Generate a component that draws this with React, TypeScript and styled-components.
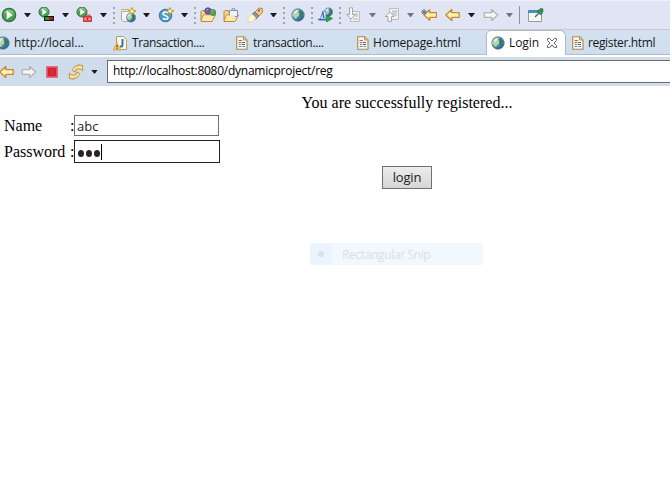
import React from "react";
import styled, { createGlobalStyle } from "styled-components";

const GlobalStyle = createGlobalStyle`
  * { box-sizing: border-box; }
  html, body { margin: 0; padding: 0; background: #fff; overflow: hidden; }
`;

const uiFont = `"Open Sans", "Noto Sans", sans-serif`;

const Window = styled.div`
  width: 670px;
  height: 503px;
  display: flex;
  flex-direction: column;
  overflow: hidden;
  background: #fff;
  font-family: ${uiFont};
  color: #000;
`;

const Toolbar = styled.div`
  height: 30px;
  flex: none;
  display: flex;
  align-items: center;
  padding-left: 1px;
  background: #e0e5f5;
  border-top: 1px solid #f0f0f0;
  border-bottom: 1px solid #c9c9cd;
`;

const Slot = styled.span<{ $gap?: number }>`
  display: block;
  flex: none;
  line-height: 0;
  margin-left: ${(p) => p.$gap ?? 0}px;
`;

const Arrow = styled.span<{ $gap: number; $dim?: boolean }>`
  flex: none;
  width: 7px;
  height: 4px;
  margin-left: ${(p) => p.$gap}px;
  background: ${(p) => (p.$dim ? "#74767e" : "#1c1c20")};
  clip-path: polygon(0 0, 100% 0, 57% 100%, 43% 100%);
`;

const Grip = styled.span<{ $gap: number }>`
  flex: none;
  width: 3px;
  height: 17px;
  margin-left: ${(p) => p.$gap}px;
  background: repeating-linear-gradient(#a5a5a2 0 2px, transparent 2px 5px) 1px 0 / 2px 17px no-repeat;
`;

const Divider = styled.span`
  flex: none;
  width: 1px;
  height: 18px;
  margin-left: 6px;
  background: #8d8f99;
`;

const TabBar = styled.div`
  height: 25px;
  flex: none;
  display: flex;
  background: linear-gradient(#d3e1f0, #cfdeee);
  box-shadow: inset 0 -1px #b7b8d4;
`;

const Tab = styled.div<{ $width: number; $pad: number; $active?: boolean }>`
  width: ${(p) => p.$width}px;
  height: 25px;
  flex: none;
  display: flex;
  align-items: center;
  padding-left: ${(p) => p.$pad}px;
  border-radius: 5px 6px 0 0;
  ${(p) =>
    p.$active &&
    `background: #fff; border: 1px solid #b3b7d2; border-bottom: 0;`}
`;

const TabLabel = styled.span<{ $gap: number; $spacing: number }>`
  margin-left: ${(p) => p.$gap}px;
  font-size: 12px;
  line-height: 16px;
  letter-spacing: ${(p) => p.$spacing}px;
  white-space: nowrap;
  color: #161616;
`;

const AddressRow = styled.div`
  height: 31px;
  flex: none;
  display: flex;
  align-items: center;
  border-top: 2px solid #fff;
  background: #cedcec;
`;

const AddressField = styled.div`
  flex: 1;
  height: 23px;
  margin: 0 -2px 0 9px;
  padding-left: 5px;
  border: 1px solid #6c6c6c;
  background: #fff;
  font-size: 12px;
  line-height: 20px;
  letter-spacing: -0.25px;
  white-space: nowrap;
`;

const Page = styled.main`
  flex: 1;
  width: 814px;
  padding-top: 8px;
  display: flex;
  flex-direction: column;
  align-items: center;
  font-family: "Liberation Serif", serif;
  font-size: 16px;
`;

const Message = styled.div`
  line-height: 18px;
  white-space: nowrap;
`;

const Form = styled.form`
  align-self: stretch;
  padding: 3px 0 0 4px;
`;

const Field = styled.label<{ $height: number }>`
  display: grid;
  grid-template-columns: 66px 4px auto;
  align-items: center;
  justify-content: start;
  height: ${(p) => p.$height}px;
  line-height: 18px;
`;

const TextBox = styled.span<{ $active?: boolean }>`
  display: flex;
  align-items: center;
  width: ${(p) => (p.$active ? 146 : 145)}px;
  height: ${(p) => (p.$active ? 23 : 21)}px;
  padding-left: ${(p) => (p.$active ? 3 : 2)}px;
  border: 1px solid ${(p) => (p.$active ? "#222" : "#707070")};
  font-family: ${uiFont};
  font-size: 13px;
  color: #222;
`;

const Bullet = styled.span`
  width: 6px;
  height: 7px;
  margin: 3px 2px 0 0;
  border-radius: 50%;
  background: #2a2224;
`;

const Caret = styled.span`
  width: 1px;
  height: 16px;
  margin-left: -1px;
  background: #000;
`;

const LoginButton = styled.button`
  width: 50px;
  height: 23px;
  margin-top: -1px;
  padding: 0 0 1px;
  border: 1px solid #707070;
  background: linear-gradient(#ececec, #d6d6d6);
  font-family: ${uiFont};
  font-size: 13px;
  line-height: 18px;
  letter-spacing: -0.2px;
  color: #222;
`;

const SnipHint = styled.div`
  align-self: flex-start;
  display: flex;
  align-items: center;
  width: 173px;
  height: 22px;
  margin: 54px 0 0 310px;
  background: #f1f8fe;
  font-family: ${uiFont};
  font-size: 12px;
  letter-spacing: -0.35px;
  color: #dcdfe2;
`;

const SnipMark = styled.span`
  display: flex;
  align-items: center;
  justify-content: center;
  width: 22px;
  height: 22px;
  margin-right: 10px;
  background: #e9f4fe;
  &::after {
    content: "";
    width: 6px;
    height: 6px;
    border-radius: 50%;
    background: #dde1e4;
  }
`;

const Svg = ({ children, w = 16 }: { children: React.ReactNode; w?: number }) => (
  <svg width={w} height="16" viewBox={`0 0 ${w} 16`} fill="none">
    {children}
  </svg>
);

const PlayDisc = ({ small }: { small?: boolean }) => (
  <g transform={small ? "translate(0 -1) scale(.75)" : undefined}>
    <circle cx="8" cy="8" r="6.7" fill="#48a052" stroke="#24773a" strokeWidth="1.2" />
    <path d="M2.5 7a5.6 5.6 0 0 1 11 0c-3-1.8-7-1.8-11 0z" fill="#7fc27f" />
    <path d="M5.7 3.8v8.4L12 8z" fill="#fff" />
  </g>
);

const RunIcon = () => <Svg><PlayDisc /></Svg>;

const CoverageIcon = () => (
  <Svg>
    <PlayDisc small />
    <path d="M6 9h10v5H6z" fill="#161616" />
    <path d="M7 10h4v3H7z" fill="#0ca52b" />
    <path d="M11 10h4v3h-4z" fill="#b41c25" />
  </Svg>
);

const ToolsIcon = () => (
  <Svg>
    <PlayDisc small />
    <path d="M10 9.5V8h4v1.5" stroke="#bf3131" />
    <path d="M7.5 9.5h8v5h-8z" fill="#e95352" stroke="#c93337" />
    <path d="M8 12h7" stroke="#f7b5ad" />
    <path d="M11 11h1v2h-1z" fill="#981d24" />
  </Svg>
);

const Sparkle = () => (
  <path d="M12 .5 13.2 3 16 4l-2.8 1.2L12 8l-1.2-2.8L8 4l2.8-1z" fill="#fff3a5" stroke="#c29124" strokeWidth=".9" />
);

const Globe = ({ x = 8, y = 8, r = 6.5 }: { x?: number; y?: number; r?: number }) => (
  <g transform={`translate(${x} ${y}) scale(${r / 6.5})`}>
    <circle r="6.2" fill="#4289b7" stroke="#54799c" strokeWidth=".8" />
    <path d="M-5.5-2C-4-5-1-6 1-5.5L0-3l2 1-1 3-2 1-1 3-2-3-2-1z" fill="#b6d4a4" />
    <path d="M2-4c2 0 3 1 3.5 3L4 3 1 5l1-4-1-2z" fill="#387967" />
    <path d="M-4-3-1-5l1 1-3 3z" fill="#e8f3df" />
    <path d="M-3 4.5C0 6 4 5 5.5 1.5" stroke="#255781" />
  </g>
);

const NewWebIcon = () => (
  <Svg>
    <path d="M1.5 4v8.5c0 1.6 2 2 4 2h6V4" fill="#f4f6f3" stroke="#a3aaa4" />
    <path d="M1 2.5h8M1 4.5h8" stroke="#d2ad62" />
    <Globe x={11} y={10.5} r={4.8} />
    <Sparkle />
  </Svg>
);

const ServletIcon = () => (
  <Svg>
    <circle cx="7.5" cy="8.5" r="6.3" fill="#4c99c9" stroke="#327aa9" />
    <path d="M10 5.8C8 4.5 5 5 5 6.8c0 2.2 5 1.5 5 3.7 0 2-3.3 2.2-5.3.9" stroke="#fff" strokeWidth="1.6" />
    <Sparkle />
  </Svg>
);

const FolderShape = () => (
  <>
    <path d="M1 13.5v-9l1-1h3l1 2h7v3" fill="#f2d38d" stroke="#bd8433" />
    <path d="M1 14.5 3.5 8h12l-3.5 6.5z" fill="#ffe9ab" stroke="#c4892d" />
  </>
);

const TypeFolderIcon = () => (
  <Svg>
    <FolderShape />
    <circle cx="8" cy="4" r="3.2" fill="#795aa5" stroke="#634894" />
    <circle cx="12.7" cy="5.5" r="3" fill="#55a765" stroke="#358346" />
    <path d="M6.5 3.5 8 2M11.5 5 13 3.5" stroke="#b9b7d7" />
    <path d="M3.5 8.5H12l-1 5.2H1.7z" fill="#ffe9ab" />
  </Svg>
);

const TaskFolderIcon = () => (
  <Svg>
    <FolderShape />
    <path d="M6.5 3.5h8v6h-8z" fill="#edf4fc" stroke="#8694b4" />
    <path d="M9 3V1.8h3V3" stroke="#8592ae" />
    <path d="M1.7 14l2-5.4H12L10.5 14z" fill="#ffe9ab" />
  </Svg>
);

const TorchIcon = () => (
  <Svg>
    <path d="m7 6 5-5 3.5.5.3 3.5-5 5z" fill="#f7c67e" stroke="#c58230" />
    <path d="m5 7 3-2 4 4-3 3-3-1z" fill="#989391" stroke="#7b7778" />
    <path d="m1 11 4-4 4 4-4 4H1z" fill="#fff8cc" stroke="#dccb9a" strokeWidth=".7" />
    <path d="m11 4 2-1" stroke="#53699a" strokeWidth="1.5" />
  </Svg>
);

const GlobeIcon = () => <Svg><Globe /></Svg>;

const LaunchGlobeIcon = () => (
  <Svg>
    <Globe x={10.5} y={5} r={4.4} />
    <path d="M2 13 5 4l3 1v8z" fill="#dcebff" stroke="#6b91c4" />
    <path d="M0 12.5h8M4.5 5 6 11" stroke="#356cac" strokeWidth="1.5" />
    <path d="M8.5 8v7l6-3.5z" fill="#24a252" stroke="#16823e" strokeWidth=".7" />
  </Svg>
);

const AnnotationIcon = ({ up }: { up?: boolean }) => (
  <Svg>
    <path d={up ? "M5.5 1.5h9v11h-9z" : "M4.5 4.5h9v10h-9z"} fill="#f1f1f1" stroke="#bdbdbd" />
    <path d={up ? "M8 4h5M8 6h5M8 8h5" : "M9 7h3M9 9h3M7 12h5"} stroke="#aaafb8" />
    <path
      d={up ? "M4 14.5v-5H1.2L5.7 5l4.5 4.5H7.5v5z" : "M3.5 .8v6.7H.8L5 12l4.2-4.5H6.5V.8z"}
      fill="#f8f8f8"
      stroke="#a4a4a4"
    />
  </Svg>
);

const BackArrow = ({ star }: { star?: boolean }) => (
  <Svg>
    <path
      d={star ? "M3 8 8.7 2.7v3h6.8v4.6H8.7v3z" : "M.8 8 6.8 2.4v3.3h7.4v4.6H6.8v3.3z"}
      fill="#fff2bd"
      stroke="#c98a25"
      strokeWidth="1.3"
      strokeLinejoin="round"
    />
    {star && <path d="M0 5h6M1 3l4 4M5 3 1 7M3 2v6" stroke="#526a88" strokeWidth=".9" />}
  </Svg>
);

const ForwardArrow = () => (
  <Svg>
    <path d="M14.7 8 8.7 2.4v3.3H1.3v4.6h7.4v3.3z" fill="#f5f5f5" stroke="#b2b2b2" strokeWidth="1.3" strokeLinejoin="round" />
  </Svg>
);

const PinIcon = () => (
  <Svg>
    <path d="M.5 3.5h13v11H.5z" fill="#f4fafc" stroke="#9c9c82" />
    <path d="M0 3h11v3H0z" fill="#4791bd" />
    <path d="m7 10 4-4" stroke="#5f6867" strokeWidth="1.5" />
    <path d="m9 4 4-2 2 2-2 4z" fill="#399d62" stroke="#27794a" />
    <circle cx="13.5" cy="3" r="2" fill="#2c8e50" />
  </Svg>
);

const JavaFileIcon = () => (
  <Svg>
    <path d="M3.5 1.5h7l3 3v10h-10z" fill="#fafaf1" stroke="#b89b58" />
    <path d="M9.5 4v5.5c0 2-1 2.2-2.5 2" stroke="#3471a5" strokeWidth="2" />
    <path d="M4 7.5 7.8 15H.3z" fill="#f9c65d" stroke="#d49736" strokeWidth=".7" />
    <path d="M4 10v2.5M4 13.2v1" stroke="#503014" />
  </Svg>
);

const HtmlFileIcon = () => (
  <Svg w={12}>
    <path d="M.7 1.7h7L11 5v9.3H.7z" fill="#fbfaf0" stroke="#aa8846" strokeWidth="1.1" />
    <path d="M7.5 2v3H11" fill="#efcf84" stroke="#b99855" />
    <path d="M2.5 5.5H6M2.5 7.5h3" stroke="#dc5661" />
    <path d="M6 7.5h3M3 9.5h1.5M5.5 9.5H9" stroke="#4961b5" />
    <path d="M2.5 11.5h3M6.5 11.5H9" stroke="#49a374" />
  </Svg>
);

const CloseIcon = () => (
  <svg width="12" height="12" viewBox="0 0 12 12" fill="none">
    <path
      d="M1.5 1.5h2L6 4l2.5-2.5h2v2L8 6l2.5 2.5v2h-2L6 8l-2.5 2.5h-2v-2L4 6 1.5 3.5z"
      fill="#fff"
      stroke="#62646b"
    />
  </svg>
);

const StopIcon = () => (
  <Svg>
    <path d="M2.5 2.5h11v11h-11z" fill="#e05360" stroke="#d67377" />
    <path d="M4.5 4.5h7v7h-7z" fill="#df2434" stroke="#cb1d31" />
  </Svg>
);

const RefreshIcon = () => (
  <Svg>
    <path d="M5.5 7.5 4.3 5.6 7.2 2.2l3-.6V.8l4.3.7.2 5.3-1.9-1.5-2.3-.5-2.7.9v1.8z" fill="#ffe19a" stroke="#c38729" strokeWidth=".9" strokeLinejoin="round" />
    <path d="m10.5 8.5 1.2 1.9-2.9 3.4-3 .6v.8L1.5 14.5 1.3 9.2l1.9 1.5 2.3.5 2.7-.9V8.5z" fill="#ffe19a" stroke="#c38729" strokeWidth=".9" strokeLinejoin="round" />
  </Svg>
);

export default function App() {
  return (
    <>
      <GlobalStyle />
      <Window>
        <Toolbar>
          <Slot><RunIcon /></Slot>
          <Arrow $gap={7} />
          <Slot $gap={7}><CoverageIcon /></Slot>
          <Arrow $gap={8} />
          <Slot $gap={7}><ToolsIcon /></Slot>
          <Arrow $gap={8} />
          <Grip $gap={5} />
          <Slot $gap={5}><NewWebIcon /></Slot>
          <Arrow $gap={7} />
          <Slot $gap={8}><ServletIcon /></Slot>
          <Arrow $gap={7} />
          <Grip $gap={5} />
          <Slot $gap={4}><TypeFolderIcon /></Slot>
          <Slot $gap={7}><TaskFolderIcon /></Slot>
          <Slot $gap={8}><TorchIcon /></Slot>
          <Arrow $gap={7} />
          <Grip $gap={5} />
          <Slot $gap={5}><GlobeIcon /></Slot>
          <Grip $gap={4} />
          <Slot $gap={5}><LaunchGlobeIcon /></Slot>
          <Grip $gap={4} />
          <Slot $gap={5}><AnnotationIcon /></Slot>
          <Arrow $gap={7} $dim />
          <Slot $gap={8}><AnnotationIcon up /></Slot>
          <Arrow $gap={7} $dim />
          <Slot $gap={7}><BackArrow star /></Slot>
          <Slot $gap={8}><BackArrow /></Slot>
          <Arrow $gap={7} />
          <Slot $gap={8}><ForwardArrow /></Slot>
          <Arrow $gap={7} $dim />
          <Divider />
          <Slot $gap={8}><PinIcon /></Slot>
        </Toolbar>
        <TabBar>
          <Tab $width={113} $pad={0}>
            <Slot $gap={-5}><GlobeIcon /></Slot>
            <TabLabel $gap={3} $spacing={-0.05}>http://local...</TabLabel>
          </Tab>
          <Tab $width={123} $pad={0}>
            <Slot><JavaFileIcon /></Slot>
            <TabLabel $gap={3} $spacing={-0.4}>Transaction....</TabLabel>
          </Tab>
          <Tab $width={121} $pad={0}>
            <Slot><HtmlFileIcon /></Slot>
            <TabLabel $gap={5} $spacing={-0.35}>transaction....</TabLabel>
          </Tab>
          <Tab $width={129} $pad={0}>
            <Slot><HtmlFileIcon /></Slot>
            <TabLabel $gap={4} $spacing={-0.2}>Homepage.html</TabLabel>
          </Tab>
          <Tab $width={80} $pad={3} $active>
            <Slot><GlobeIcon /></Slot>
            <TabLabel $gap={3} $spacing={-0.1}>Login</TabLabel>
            <Slot $gap={7}><CloseIcon /></Slot>
          </Tab>
          <Tab $width={104} $pad={6}>
            <Slot><HtmlFileIcon /></Slot>
            <TabLabel $gap={4} $spacing={-0.35}>register.html</TabLabel>
          </Tab>
        </TabBar>
        <AddressRow>
          <Slot $gap={-1}><BackArrow /></Slot>
          <Slot $gap={6}><ForwardArrow /></Slot>
          <Slot $gap={7}><StopIcon /></Slot>
          <Slot $gap={8}><RefreshIcon /></Slot>
          <Arrow $gap={7} />
          <AddressField>http://localhost:8080/dynamicproject/reg</AddressField>
        </AddressRow>
        <Page>
          <Message>You are successfully registered...</Message>
          <Form>
            <Field $height={21}>
              <span>Name</span>
              <span>:</span>
              <TextBox>abc</TextBox>
            </Field>
            <Field $height={31}>
              <span>Password</span>
              <span>:</span>
              <TextBox $active>
                <Bullet />
                <Bullet />
                <Bullet />
                <Caret />
              </TextBox>
            </Field>
          </Form>
          <LoginButton type="button">login</LoginButton>
          <SnipHint>
            <SnipMark />
            Rectangular Snip
          </SnipHint>
        </Page>
      </Window>
    </>
  );
}
